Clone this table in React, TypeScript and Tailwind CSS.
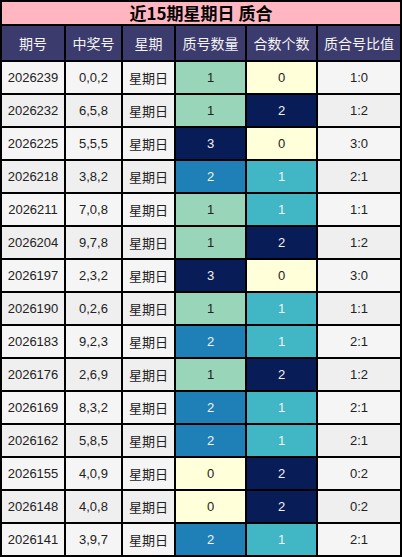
import React from "react";

const rows: [string, string, number, number, string][] = [
  ["2026239", "0,0,2", 1, 0, "1:0"],
  ["2026232", "6,5,8", 1, 2, "1:2"],
  ["2026225", "5,5,5", 3, 0, "3:0"],
  ["2026218", "3,8,2", 2, 1, "2:1"],
  ["2026211", "7,0,8", 1, 1, "1:1"],
  ["2026204", "9,7,8", 1, 2, "1:2"],
  ["2026197", "2,3,2", 3, 0, "3:0"],
  ["2026190", "0,2,6", 1, 1, "1:1"],
  ["2026183", "9,2,3", 2, 1, "2:1"],
  ["2026176", "2,6,9", 1, 2, "1:2"],
  ["2026169", "8,3,2", 2, 1, "2:1"],
  ["2026162", "5,8,5", 2, 1, "2:1"],
  ["2026155", "4,0,9", 0, 2, "0:2"],
  ["2026148", "4,0,8", 0, 2, "0:2"],
  ["2026141", "3,9,7", 2, 1, "2:1"],
];

const primeCls: Record<number, string> = {
  0: "bg-[#ffffd9] text-[#222]",
  1: "bg-[#99d5b9] text-[#222]",
  2: "bg-[#1f80b8] text-[#f2f2f2]",
  3: "bg-[#081d58] text-[#f2f2f2]",
};
const compCls: Record<number, string> = {
  0: "bg-[#ffffd9] text-[#222]",
  1: "bg-[#41b6c4] text-[#f2f2f2]",
  2: "bg-[#081d58] text-[#f2f2f2]",
};

const num = "font-['Liberation_Sans',Arial,sans-serif]";
const cjk = "font-['Noto_Sans_CJK_SC','Liberation_Sans',sans-serif]";

export default function App() {
  const headers = ["期号", "中奖号", "星期", "质号数量", "合数个数", "质合号比值"];
  return (
    <div className="w-[402px] h-[557px] bg-black p-[2px]">
      <div className="grid grid-cols-[62px_55px_51px_69px_69px_82px] gap-x-[2px] gap-y-[2px] bg-black">
        <div className={`col-span-6 h-[22px] bg-[#ffb6c1] flex items-center justify-center whitespace-nowrap text-[17px] font-bold text-black ${cjk}`}>
          近15期星期日 质合
        </div>
        {headers.map((h) => (
          <div
            key={h}
            className={`h-[34px] bg-[#3c3b6e] flex items-center justify-center whitespace-nowrap text-[14px] text-[#f4f4f4] ${cjk}`}
          >
            {h}
          </div>
        ))}
        {rows.map(([id, nums, p, c, ratio], i) => {
          const bg = i % 2 === 0 ? "bg-[#f5f5f5]" : "bg-[#efefef]";
          return (
            <React.Fragment key={id}>
              <div className={`h-[31px] ${bg} flex items-center justify-center whitespace-nowrap text-[13px] text-[#222] ${num}`}>{id}</div>
              <div className={`h-[31px] ${bg} flex items-center justify-center whitespace-nowrap text-[13px] text-[#222] ${num}`}>{nums}</div>
              <div className={`h-[31px] ${bg} flex items-center justify-center whitespace-nowrap text-[13px] text-[#222] ${cjk}`}>星期日</div>
              <div className={`h-[31px] ${primeCls[p]} flex items-center justify-center whitespace-nowrap text-[13px] ${num}`}>{p}</div>
              <div className={`h-[31px] ${compCls[c]} flex items-center justify-center whitespace-nowrap text-[13px] ${num}`}>{c}</div>
              <div className={`h-[31px] ${bg} flex items-center justify-center whitespace-nowrap text-[13px] text-[#222] ${num}`}>{ratio}</div>
            </React.Fragment>
          );
        })}
      </div>
    </div>
  );
}
